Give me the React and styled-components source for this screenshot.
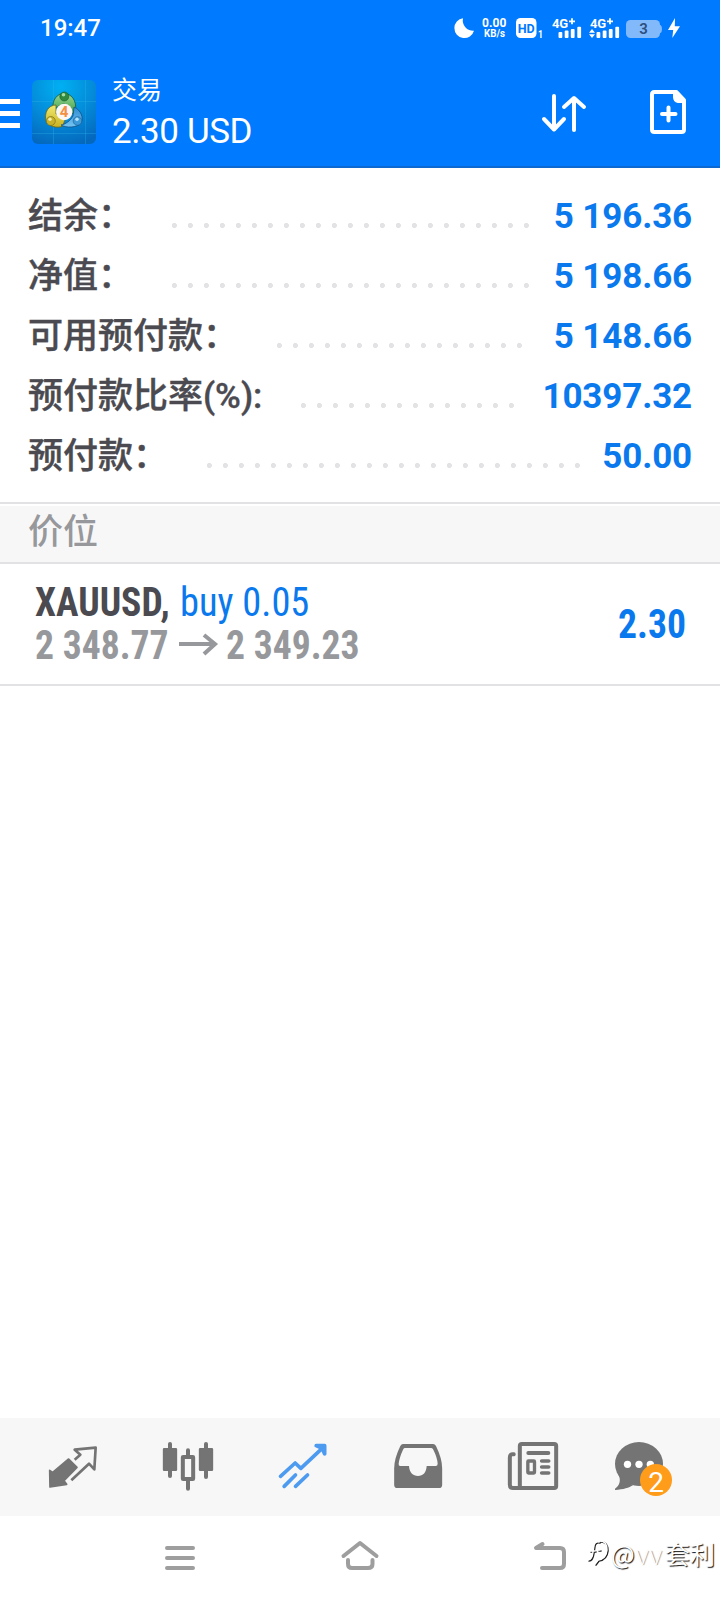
import React from 'react';
import styled, { createGlobalStyle } from 'styled-components';

const GlobalStyle = createGlobalStyle`
  * {
    box-sizing: border-box;
  }

  body {
    margin: 0;
    background: #fff;
    font-family: Roboto, 'Noto Sans CJK SC', sans-serif;
  }

  svg {
    display: block;
    flex: none;
  }
`;

const Screen = styled.div`
  display: flex;
  flex-direction: column;
  width: 720px;
  height: 1600px;
  overflow: hidden;
  background: #fff;
`;

const Header = styled.header`
  height: 168px;
  background: #007aff;
  border-bottom: 2px solid #0c69d2;
  color: #fff;
`;

const StatusBar = styled.div`
  display: flex;
  justify-content: space-between;
  height: 56px;
  padding-left: 40px;
`;

const Clock = styled.div`
  font-size: 24px;
  font-weight: 500;
  line-height: 56px;
`;

const AppBar = styled.div`
  display: flex;
  align-items: center;
  height: 112px;
  padding-right: 30px;
`;

const MenuButton = styled.div`
  display: flex;
  flex-direction: column;
  gap: 7px;
  width: 20px;
  margin: 3px 12px 0 0;
`;

const MenuLine = styled.span`
  height: 5px;
  background: #fff;
`;

const TitleBlock = styled.div`
  flex: 1;
  margin: 2px 0 0 16px;
`;

const Title = styled.div`
  height: 38px;
  font-size: 25px;
  line-height: 38px;
`;

const Profit = styled.div`
  height: 44px;
  font-size: 35px;
  line-height: 44px;
  letter-spacing: -0.4px;
`;

const HeaderActions = styled.div`
  display: flex;
  align-items: center;
  gap: 58px;
`;

const Summary = styled.section`
  height: 334px;
  padding: 18px 28px 0;
`;

const SummaryRow = styled.div`
  display: flex;
  height: 60px;
  font-size: 35px;
`;

const Label = styled.div`
  line-height: 62px;
  font-weight: 500;
  color: #4a4a50;
  white-space: nowrap;
  -webkit-text-stroke: 0.4px #4a4a50;
`;

const Dots = styled.div`
  width: ${(props) => props.$count * 16}px;
  height: 16px;
  margin: 31px 0 0 33px;
  background: radial-gradient(circle at 8.4px 8.5px, #e3e3e5 2.2px, transparent 2.9px) 0 0 / 16px 16px;
`;

const Value = styled.div`
  margin-left: auto;
  line-height: 61px;
  font-weight: 700;
  letter-spacing: -0.15px;
  color: #0b79ee;
`;

const SectionTitle = styled.div`
  height: 62px;
  padding-left: 28px;
  border-top: 2px solid #e2e2e4;
  border-bottom: 2px solid #e2e2e4;
  box-shadow: inset 0 2px 0 #fff;
  background: #f7f7f7;
  font-size: 35px;
  font-weight: 500;
  line-height: 58px;
  color: #97989c;
`;

const Position = styled.div`
  display: flex;
  justify-content: space-between;
  height: 122px;
  padding: 17px 35px 0;
  border-bottom: 2px solid #e2e2e4;
  font-size: 40px;
  font-family: 'Roboto Condensed', Roboto, sans-serif;
  font-stretch: 75%;
`;

const PositionLine = styled.div`
  display: flex;
  height: 43px;
  line-height: 43px;
`;

const Condensed = styled.span`
  display: block;
  width: ${(props) => props.$width}px;
  color: ${(props) => props.$color || '#97989c'};
  font-weight: ${(props) => props.$weight || 700};
  white-space: pre;
  transform: scaleX(${(props) => props.$scale || 0.94});
  transform-origin: left;
`;

const PositionProfit = styled(Condensed)`
  margin-top: 22px;
  line-height: 43px;
`;

const Spacer = styled.div`
  flex: 1;
`;

const TabBar = styled.nav`
  display: grid;
  grid-template-columns: repeat(6, 115px);
  justify-content: center;
  height: 98px;
  padding: 19px 2px 0 0;
  background: #f7f7f7;
`;

const Tab = styled.div`
  position: relative;
  display: flex;
  justify-content: center;
  padding-right: ${(props) => (props.$badged ? 16 : 0)}px;
  color: ${(props) => (props.$active ? '#4c9bf0' : '#747474')};
`;

const Badge = styled.span`
  position: absolute;
  left: 51px;
  top: 27px;
  width: 32px;
  height: 32px;
  border-radius: 50%;
  background: #ff9c1a;
  color: #fff;
  font-size: 28px;
  line-height: 37px;
  text-align: center;
`;

const SystemBar = styled.div`
  position: relative;
  display: flex;
  align-items: center;
  gap: 140px;
  height: 84px;
  padding: 0 0 1px 160px;
  color: #9e9e9e;
`;

const Watermark = styled.div`
  position: absolute;
  left: 586px;
  top: 19px;
  display: flex;
  align-items: center;
  height: 36px;
  font-family: 'Noto Sans CJK SC', sans-serif;
  font-size: 25px;
  color: #fff;
  text-shadow: 1px 1px 1px #111;
`;

const FaintLetters = styled.span`
  margin: 0 2px 0 1px;
  font-size: 26px;
  font-weight: 300;
  letter-spacing: 1px;
  text-shadow: 1px 0 1px #999;
`;

const account = [
  { label: '结余：', value: '5 196.36', dots: 23 },
  { label: '净值：', value: '5 198.66', dots: 23 },
  { label: '可用预付款：', value: '5 148.66', dots: 16 },
  { label: '预付款比率(%):', value: '10397.32', dots: 14 },
  { label: '预付款：', value: '50.00', dots: 24 },
];

const Signal = ({ x }) => (
  <g transform={`translate(${x} 0)`}>
    <text x="0" y="27.500" fontSize="13" fontWeight="700" textLength="16">4G</text>
    <path d="M17 21.300h6M20 18.300v6" stroke="#fff" strokeWidth="1.800" />
    <rect x="6.500" y="32" width="3.800" height="6" rx="1" />
    <rect x="12.700" y="30.500" width="3.800" height="7.500" rx="1" />
    <rect x="18.800" y="29" width="3.800" height="9" rx="1" />
    <rect x="25.300" y="26.700" width="3.800" height="11.300" rx="1" />
  </g>
);

const StatusIcons = () => (
  <svg width="280" height="56" viewBox="0 0 280 56" fill="#fff" fontFamily="Roboto, sans-serif">
    <path d="M23 18.200A10 10 0 1 0 34 30.800A10.400 10.400 0 0 1 23 18.200Z" />
    <text x="42" y="27" fontSize="12" fontWeight="700" textLength="24.500">0.00</text>
    <text x="44" y="37" fontSize="10" fontWeight="700" textLength="21" lengthAdjust="spacingAndGlyphs">KB/s</text>
    <rect x="76" y="18" width="20.500" height="20" rx="4.500" />
    <text x="77.700" y="32.600" fontSize="12.500" fontWeight="700" fill="#007aff" textLength="17" lengthAdjust="spacingAndGlyphs">HD</text>
    <text x="98" y="38" fontSize="10.500" fontWeight="700" textLength="5" lengthAdjust="spacingAndGlyphs">1</text>
    <Signal x={112} />
    <Signal x={150} />
    <path d="M149 32.700L152 29L155 32.700ZM149 34.300L152 38L155 34.300Z" />
    <rect x="186" y="20" width="34" height="18" rx="4.500" fill="#82b9fb" />
    <path d="M220 25h0.500q1.500 1 1.500 4t-1.500 4h-0.500z" fill="#82b9fb" />
    <text x="203.500" y="34.400" fontSize="15" fontWeight="600" fill="#2c4f80" textAnchor="middle">3</text>
    <path d="M235 18L228 30H233.200L232.300 38L240 26.300H234.800Z" />
  </svg>
);

const AppLogo = () => (
  <svg width="64" height="64" viewBox="0 0 64 64">
    <defs>
      <radialGradient id="logoBg" cx="0.45" cy="0.1" r="0.95">
        <stop offset="0" stopColor="#00b0f2" />
        <stop offset="0.55" stopColor="#048ad8" />
        <stop offset="1" stopColor="#0468bd" />
      </radialGradient>
      <linearGradient id="logoGreen" x1="0" y1="0" x2="0" y2="1">
        <stop offset="0" stopColor="#9bd892" />
        <stop offset="1" stopColor="#2b9440" />
      </linearGradient>
      <linearGradient id="logoYellow" x1="0" y1="0" x2="0" y2="1">
        <stop offset="0" stopColor="#f0ea72" />
        <stop offset="1" stopColor="#c9b222" />
      </linearGradient>
      <linearGradient id="logoBlue" x1="0" y1="0" x2="0" y2="1">
        <stop offset="0" stopColor="#2e8ad0" />
        <stop offset="1" stopColor="#74c5f2" />
      </linearGradient>
    </defs>
    <rect width="64" height="64" rx="6" fill="url(#logoBg)" />
    <path d="M21.500 0V64M53.500 0V64M0 21.500H64M0 53.500H64" stroke="#35b5ee" strokeOpacity="0.3" />
    <path d="M21 29C20 20 25 13.500 32 13.500S45 20 43.500 31L36 37L33 24H31Z" fill="url(#logoGreen)" stroke="#155c38" strokeWidth="0.8" />
    <path d="M24 25C16 25 12 33 14 41C16 46 25 49 31 46L33 39L24 34Z" fill="url(#logoYellow)" stroke="#5f6420" strokeWidth="0.8" />
    <path d="M42 27C49 30 52 38 49 43C45 48 34 48 29 45C34 44 38 41 41 36Z" fill="url(#logoBlue)" stroke="#124f86" strokeWidth="0.8" />
    <circle cx="32.300" cy="16.500" r="4.500" fill="#2f8a3f" stroke="#1a5b33" strokeWidth="0.6" />
    <circle cx="18.800" cy="41" r="4.500" fill="#c7b229" stroke="#6c671b" strokeWidth="0.6" />
    <circle cx="45.500" cy="41" r="4.300" fill="#3d9bd9" stroke="#17598f" strokeWidth="0.6" />
    <circle cx="31.500" cy="14.800" r="1.800" fill="#a4dca4" />
    <circle cx="18" cy="39.300" r="1.700" fill="#f3edab" />
    <circle cx="45" cy="39.300" r="1.700" fill="#b7e2fa" />
    <circle cx="32.200" cy="32" r="8.200" fill="#fbf6f1" />
    <text x="32" y="37.300" fontFamily="Roboto, sans-serif" fontSize="15" fontWeight="700" fill="#f28f45" textAnchor="middle">4</text>
  </svg>
);

const SortIcon = () => (
  <svg width="48" height="48" viewBox="0 0 48 48" fill="none" stroke="#fff" strokeWidth="4" strokeLinecap="round" strokeLinejoin="round">
    <path d="M14 8V40M4 31L14 41.500L24 31" />
    <path d="M34 42V11M24 19L34 10L44 19" />
  </svg>
);

const NewOrderIcon = () => (
  <svg width="44" height="48" viewBox="0 0 44 48" fill="none" stroke="#fff" strokeWidth="4" strokeLinecap="round" strokeLinejoin="round">
    <path d="M30.500 4H8.500Q6 4 6 6.500V41.500Q6 44 8.500 44H35.500Q38 44 38 41.500V12Z" />
    <path d="M28 5L37 14H32Q28 13 28 9Z" fill="#fff" strokeWidth="2" />
    <path d="M16 26H29.500M22.500 19.500V32.500" />
  </svg>
);

const PriceArrow = styled.svg`
  width: 48px;
  height: 43px;
`;

const tabSvg = { width: 56, height: 56, viewBox: '0 0 168 168' };

const QuotesIcon = () => (
  <svg {...tabSvg} fill="none" stroke="currentColor" strokeLinejoin="round">
    <path d="M17 100L26 106L74 66L99 91L60 131L68 142L18 150Z" fill="currentColor" strokeWidth="5" />
    <path d="M92 68L109 53L92 38L155 32L151 97L135 80L82 130" strokeWidth="8" />
  </svg>
);

const ChartsIcon = () => (
  <svg {...tabSvg} fill="currentColor" stroke="currentColor" strokeLinecap="round">
    <rect x="13.500" y="35" width="39" height="65" rx="2" strokeWidth="4" />
    <rect x="121.500" y="35" width="39" height="65" rx="2" strokeWidth="4" />
    <rect x="71.500" y="60" width="31" height="66" rx="1" fill="#f7f7f7" strokeWidth="12" />
    <path d="M33 21V102M141 21V120M33 90V117M87 40V54M87 132V155" strokeWidth="12" />
  </svg>
);

const TradeIcon = () => (
  <svg {...tabSvg} fill="none" stroke="currentColor" strokeWidth="11" strokeLinecap="round" strokeLinejoin="round">
    <path d="M19.500 118L63.500 78L80.500 94L150 29" />
    <path d="M126.500 26H152V51L144 34Z" fill="currentColor" />
    <path d="M30.500 148L64.500 114M64.500 148L100.500 114" />
  </svg>
);

const HistoryIcon = () => (
  <svg {...tabSvg} fill="currentColor">
    <path d="M42 21H132Q138 21 141 27Q159.500 65 159.500 94V143Q159.500 153 150 153H25Q15.500 153 15.500 143V94Q15.500 65 34 27Q37 21 42 21Z" />
    <path d="M47 33H127Q131 33 133 38Q145 62 146 80Q146 87 140 87H113C112 107 102 117 87 117C72 117 61 107 60 87H34Q28 87 29 80Q31 62 42 38Q44 33 47 33Z" fill="#f7f7f7" />
  </svg>
);

const NewsIcon = () => (
  <svg {...tabSvg} fill="none" stroke="currentColor" strokeWidth="12" strokeLinecap="round">
    <rect x="47.500" y="21" width="109" height="132" rx="6" />
    <path d="M29 52Q17.500 50 17.500 62V143Q17.500 153 27 153H50" />
    <path d="M73 48H133" />
    <rect x="71.500" y="72" width="20" height="36" rx="2" strokeWidth="10" />
    <path d="M113 72H134M113 90H134M113 108H134" strokeWidth="11" />
  </svg>
);

const MessagesIcon = () => (
  <svg {...tabSvg} fill="currentColor">
    <ellipse cx="84" cy="81" rx="72" ry="66" />
    <path d="M22 112C32 132 24 148 12 155V159C38 158 54 152 66 145Z" />
    <g fill="#fff">
      <circle cx="49.500" cy="82" r="11" />
      <circle cx="84" cy="82" r="11" />
      <circle cx="118" cy="82" r="11" />
    </g>
  </svg>
);

const SystemIcon = ({ d, width = 40 }) => (
  <svg width={width} height="40" viewBox={`0 0 ${width} 40`} fill="none" stroke="currentColor" strokeWidth="4" strokeLinecap="round" strokeLinejoin="round">
    <path d={d} />
  </svg>
);

const App = () => (
  <>
    <GlobalStyle />
    <Screen>
      <Header>
        <StatusBar>
          <Clock>19:47</Clock>
          <StatusIcons />
        </StatusBar>
        <AppBar>
          <MenuButton>
            <MenuLine />
            <MenuLine />
            <MenuLine />
          </MenuButton>
          <AppLogo />
          <TitleBlock>
            <Title>交易</Title>
            <Profit>2.30 USD</Profit>
          </TitleBlock>
          <HeaderActions>
            <SortIcon />
            <NewOrderIcon />
          </HeaderActions>
        </AppBar>
      </Header>
      <Summary>
        {account.map((row) => (
          <SummaryRow key={row.label}>
            <Label>{row.label}</Label>
            <Dots $count={row.dots} />
            <Value>{row.value}</Value>
          </SummaryRow>
        ))}
      </Summary>
      <SectionTitle>价位</SectionTitle>
      <Position>
        <div>
          <PositionLine>
            <Condensed $width={145} $color="#4a4a50">XAUUSD,</Condensed>
            <Condensed $color="#0b79ee" $weight={400} $scale={0.96}>buy 0.05</Condensed>
          </PositionLine>
          <PositionLine>
            <Condensed $width={143}>2 348.77</Condensed>
            <PriceArrow viewBox="0 0 48 43" fill="none" stroke="#97989c" strokeWidth="4">
              <path d="M1 20H37M26 11L37 20L26 30" />
            </PriceArrow>
            <Condensed $width={143}>2 349.23</Condensed>
          </PositionLine>
        </div>
        <PositionProfit $width={67} $color="#0b79ee">2.30</PositionProfit>
      </Position>
      <Spacer />
      <TabBar>
        <Tab><QuotesIcon /></Tab>
        <Tab><ChartsIcon /></Tab>
        <Tab $active><TradeIcon /></Tab>
        <Tab><HistoryIcon /></Tab>
        <Tab><NewsIcon /></Tab>
        <Tab $badged>
          <MessagesIcon />
          <Badge>2</Badge>
        </Tab>
      </TabBar>
      <SystemBar>
        <SystemIcon d="M7 10H33M7 20H33M7 30H33" />
        <SystemIcon d="M3.500 18L20 5L36.500 18M8 22V26Q8 30 12 30H28Q32.500 30 32.500 26V22" />
        <SystemIcon width={50} d="M22.500 6L16 10H40Q44 10 44 14V26Q44 30 40 30H22" />
        <Watermark>
          <svg width="25" height="32" viewBox="0 0 25 32" fill="none" strokeLinecap="round">
            <path d="M3 24Q7 24 8 16L9 9Q10 5 14 6M5 15H10M13 14h2M15 5Q22 5 22 14Q21 23 13 24L10 28" stroke="#222" strokeWidth="1.600" />
            <path d="M2 23Q6 23 7 15L8 8Q9 4 13 5M4 14H9M12 13h2M14 4Q21 4 21 13Q20 22 12 23L9 27" stroke="#fff" strokeWidth="1.500" />
          </svg>
          @<FaintLetters>vv</FaintLetters>套利
        </Watermark>
      </SystemBar>
    </Screen>
  </>
);

export default App;
